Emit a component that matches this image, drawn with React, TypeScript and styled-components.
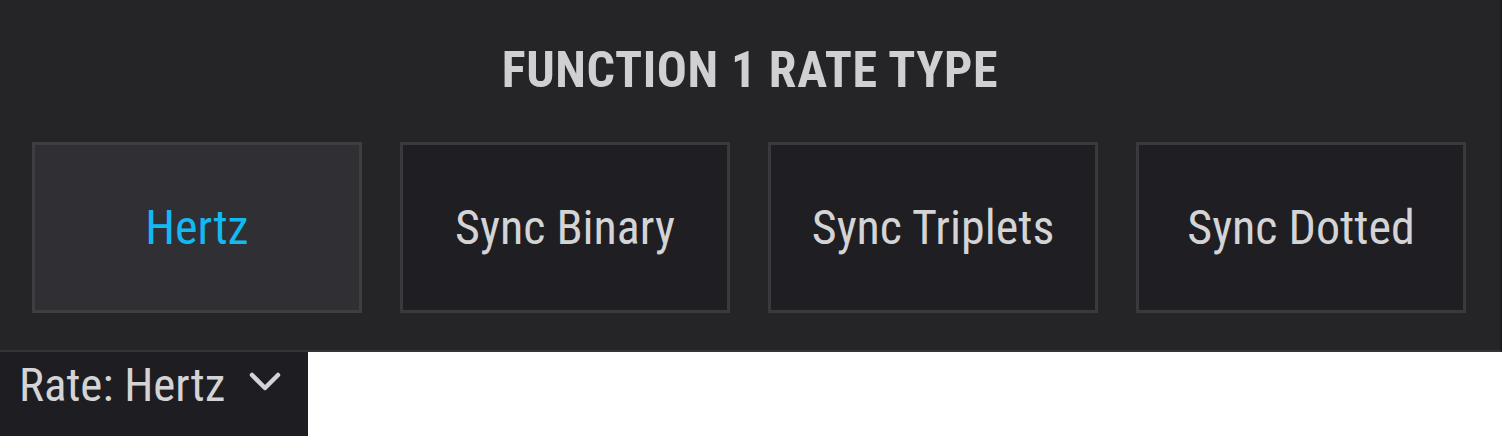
import React from "react";
import styled, { createGlobalStyle } from "styled-components";

const Global = createGlobalStyle`
  html, body { margin: 0; padding: 0; background: #ffffff; }
  body { width: 1502px; height: 436px; overflow: hidden; font-family: "Roboto Condensed", Roboto, "Liberation Sans", sans-serif; }
`;

const Page = styled.div`
  display: flex;
  flex-direction: column;
  width: 1502px;
  height: 436px;
`;

const Panel = styled.section`
  box-sizing: border-box;
  width: 1502px;
  height: 352px;
  background: #252528;
  border-bottom: 2px solid #343438;
  border-right: 2px solid #1c1c1f;
  display: flex;
  flex-direction: column;
  align-items: center;
`;

const Title = styled.h1`
  margin: 0;
  height: 142px;
  box-sizing: border-box;
  padding-top: 41px;
  font-size: 50px;
  line-height: 58px;
  font-weight: 700;
  color: #d0d0d2;
  letter-spacing: 0.6px;
`;

const Options = styled.div`
  display: flex;
  gap: 38px;
  padding-left: 32px;
  width: 100%;
  box-sizing: border-box;
`;

const Option = styled.button<{ $active?: boolean }>`
  box-sizing: border-box;
  width: 330px;
  height: 171px;
  margin: 0;
  padding: 0 0 0 0;
  border: 3px solid ${(p) => (p.$active ? "#3d3d42" : "#3a3a3e")};
  background: ${(p) => (p.$active ? "#2f2f34" : "#1f1f23")};
  color: ${(p) => (p.$active ? "#14b9f2" : "#d4d4d6")};
  font-family: "Roboto Condensed", Roboto, sans-serif;
  font-size: 48px;
  font-weight: 400;
  display: flex;
  align-items: center;
  justify-content: center;
  cursor: pointer;
`;

const Tab = styled.div`
  box-sizing: border-box;
  width: 308px;
  height: 84px;
  background: #1e1e22;
  display: flex;
  align-items: center;
  padding-left: 19px;
  padding-bottom: 20px;
  gap: 24px;
  color: #d4d4d6;
  font-size: 47px;
`;

const Chevron = styled.svg`
  width: 32px;
  height: 22px;
  flex: none;
  margin-top: -4px;
`;

const options = ["Hertz", "Sync Binary", "Sync Triplets", "Sync Dotted"];

export default function App() {
  return (
    <>
      <Global />
      <Page>
        <Panel>
          <Title>FUNCTION 1 RATE TYPE</Title>
          <Options>
            {options.map((o, i) => (
              <Option key={o} $active={i === 0}>
                {o}
              </Option>
            ))}
          </Options>
        </Panel>
        <Tab>
          <span>Rate: Hertz</span>
          <Chevron viewBox="0 0 32 22">
            <path d="M3 4 L16 17 L29 4" fill="none" stroke="#d4d4d6" strokeWidth="4.5" strokeLinecap="round" strokeLinejoin="round" />
          </Chevron>
        </Tab>
      </Page>
    </>
  );
}
